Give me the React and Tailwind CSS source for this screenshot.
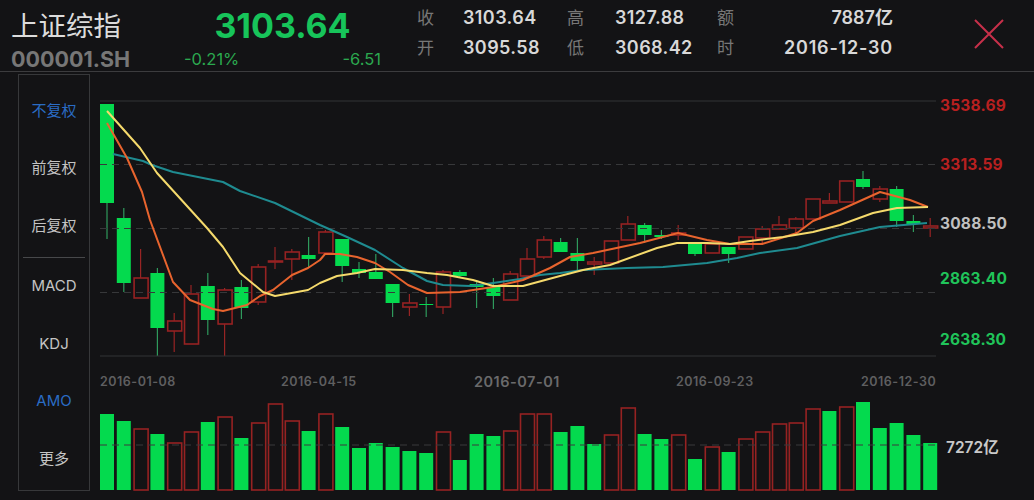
const GREEN = "#04da4e";
const RED = "#962222";

// type, body top, body bottom, wick high, wick low
const CANDLES = [
  ["g",104,203,104,239],["g",218,283,208,292],["r",278,298,249,298],["g",273,328,268,356],["r",321,331,313,352],
  ["r",294,344,285,344],["g",286,320,273,335],["r",290,324,288,356],["g",287,308,280,319],["r",267,302,264,305],
  ["r",261,262,247,269],["r",252,259,249,280],["g",255,259,237,267],["r",232,253,230,253],["g",239,266,239,282],
  ["g",269,273,262,278],["g",272,279,254,279],["g",284,303,284,317],["r",303,307,294,316],["g",304,305,297,317],
  ["r",272,307,270,314],["g",272,276,270,278],["g",284,287,280,308],["g",287,296,278,309],["r",274,300,271,300],
  ["r",259,276,248,278],["r",240,257,236,259],["g",242,252,238,252],["g",253,261,238,270],["r",262,264,257,275],
  ["r",241,263,241,263],["r",224,240,216,240],["g",225,235,223,243],["g",235,237,230,239],["r",233,235,225,240],
  ["g",244,254,244,256],["r",244,253,244,253],["g",247,254,247,263],["r",237,249,237,249],["r",229,238,226,245],
  ["r",225,229,216,229],["r",219,228,217,233],["r",199,219,199,219],["r",201,203,193,203],["r",181,202,181,202],
  ["g",179,187,171,189],["r",189,199,186,202],["g",189,221,186,227],["g",221,224,215,232],["r",226,228,218,237],
];

const VOLUMES = [
  ["g",414],["g",421],["r",429],["g",434],["r",443],["r",432],["g",422],["r",417],["g",438],["r",423],
  ["r",404],["r",421],["g",431],["r",414],["g",427],["g",448],["g",443],["g",447],["g",451],["g",453],
  ["r",432],["g",460],["g",434],["g",436],["r",431],["r",414],["r",414],["g",432],["g",426],["g",444],
  ["r",435],["r",408],["g",434],["g",439],["r",435],["g",459],["r",447],["g",452],["r",439],["r",432],
  ["r",424],["r",423],["r",409],["g",411],["r",407],["g",402],["g",428],["g",423],["g",435],["g",443],
];

const TEAL = "113,154 143,161 152,165 173,172 223,182 240,191 275,203 320,225 347,237 375,250 403,268 427,281 443,285 470,286 493,283 520,279 540,275 560,273 583,270 627,268 663,267 707,263 737,258 760,253 797,248 840,236 880,227 927,223";
const YELLOW = "107,111 140,148 157,173 207,228 223,247 240,273 263,292 275,296 308,290 320,283 337,276 357,273 375,269 403,270 427,273 447,275 473,280 493,286 523,286 560,276 583,270 610,265 657,248 677,243 707,243 730,244 750,241 783,237 813,232 840,225 873,213 897,208 928,207";
const ORANGE = "107,123 127,158 142,192 150,220 173,282 190,300 213,309 223,311 247,305 260,296 273,290 292,275 308,268 320,260 325,254 340,254 357,257 375,263 390,272 408,285 427,293 460,292 493,287 523,280 550,268 570,257 593,253 640,243 678,233 707,240 730,244 762,244 797,233 813,221 840,210 880,192 910,200 928,207";

function Candle({ c, i }) {
  const [type, top, bottom, high, low] = c;
  const x = 107 + 16.8 * i;
  const isGreen = type === "g";
  const wick = isGreen ? "#2f9a5c" : "#982424";
  return (
    <g>
      {high < top && <line x1={x} x2={x} y1={high} y2={top} stroke={wick} strokeWidth="1.2" />}
      {low > bottom && <line x1={x} x2={x} y1={bottom} y2={low} stroke={wick} strokeWidth="1.2" />}
      {isGreen ? (
        <rect x={x - 7} y={top} width="14" height={bottom - top} fill={GREEN} />
      ) : (
        <rect x={x - 6.5} y={top} width="14" height={bottom - top} fill="none" stroke={RED} strokeWidth="1.6" />
      )}
    </g>
  );
}

function PriceChart() {
  return (
    <svg width="846" height="267" viewBox="94 95 846 267" className="block shrink-0">
      {CANDLES.map((c, i) => <Candle key={i} c={c} i={i} />)}
      <line x1="100" x2="936" y1="101" y2="101" stroke="#333436" strokeWidth="1" />
      {[164.5, 228.5, 292.5].map((y) => (
        <line key={y} x1="100" x2="936" y1={y} y2={y} stroke="#37383a" strokeWidth="1" strokeDasharray="7 5" />
      ))}
      <line x1="100" x2="936" y1="356" y2="356" stroke="#333436" strokeWidth="1" />
      <polyline points={TEAL} fill="none" stroke="#1f8b90" strokeWidth="2" strokeLinejoin="round" />
      <polyline points={ORANGE} fill="none" stroke="#e8642e" strokeWidth="2" strokeLinejoin="round" />
      <polyline points={YELLOW} fill="none" stroke="#f5da6c" strokeWidth="2" strokeLinejoin="round" />
    </svg>
  );
}

function VolumeChart() {
  return (
    <svg width="846" height="100" viewBox="94 395 846 100" className="block shrink-0">
      {VOLUMES.map(([type, top], i) => {
        const x = 100 + 16.8 * i;
        return type === "g" ? (
          <rect key={i} x={x} y={top} width="14" height={490 - top} fill={GREEN} />
        ) : (
          <rect key={i} x={x + 0.5} y={top} width="14" height={490 - top} fill="none" stroke={RED} strokeWidth="1.6" />
        );
      })}
      <line x1="100" x2="936" y1="445" y2="445" stroke="#3a3b3c" strokeWidth="1" strokeDasharray="7 5" />
    </svg>
  );
}

const StatLabel = ({ children }) => <div className="text-[17px] leading-[30px] text-[#777777]">{children}</div>;
const StatValue = ({ children, className = "" }) => (
  <div className={`text-[18px] leading-[30px] font-semibold text-[#d8d8d8] ${className}`}>{children}</div>
);

export default function App() {
  return (
    <div className="w-[1034px] h-[500px] overflow-hidden flex flex-col bg-[#131315] font-[Inter,'Noto_Sans_CJK_SC',sans-serif]">
      <header className="h-[72px] shrink-0 border-b border-[#3c3c3e] flex">
        <div className="w-[184px] shrink-0 pl-[11px]">
          <div className="text-[27.5px] leading-[40px] mt-[6px] text-[#dcdcdc] whitespace-nowrap">上证综指</div>
          <div className="text-[21.5px] leading-[26px] font-bold text-[#777777]">000001.SH</div>
        </div>
        <div className="w-[197px] shrink-0">
          <div className="text-[34px] leading-[40px] mt-[6px] font-bold text-center text-[#17c45a]">3103.64</div>
          <div className="flex justify-between text-[16.5px] leading-[26px] text-[#2ba84f]">
            <span>-0.21%</span>
            <span>-6.51</span>
          </div>
        </div>
        <div className="ml-[36px] mt-[3px] w-[476px] shrink-0 grid grid-cols-[46px_104px_48px_102px_176px] content-start">
          <StatLabel>收</StatLabel>
          <StatValue className="tracking-[0.4px]">3103.64</StatValue>
          <StatLabel>高</StatLabel>
          <StatValue className="tracking-[0.4px]">3127.88</StatValue>
          <div className="flex justify-between">
            <StatLabel>额</StatLabel>
            <StatValue>7887亿</StatValue>
          </div>
          <StatLabel>开</StatLabel>
          <StatValue className="tracking-[0.4px]">3095.58</StatValue>
          <StatLabel>低</StatLabel>
          <StatValue className="tracking-[0.4px]">3068.42</StatValue>
          <div className="flex justify-between">
            <StatLabel>时</StatLabel>
            <StatValue className="tracking-[0.8px]">2016-12-30</StatValue>
          </div>
        </div>
        <div className="ml-[81px] mt-[19px] shrink-0">
          <svg width="30" height="30" viewBox="0 0 30 30" className="block">
            <path d="M1 1 L29 29 M29 1 L1 29" stroke="#c8304a" strokeWidth="2" fill="none" />
          </svg>
        </div>
      </header>

      <div className="flex flex-1 min-h-0 pl-[18px]">
        <nav className="mt-[2px] w-[72px] h-[417px] shrink-0 border border-[#37383a] flex flex-col items-center">
          <div className="mt-[26px] text-[15px] leading-[20px] text-[#2a6cc4]">不复权</div>
          <div className="mt-[37px] text-[15px] leading-[20px] text-[#c4c4c4]">前复权</div>
          <div className="mt-[38px] text-[15px] leading-[20px] text-[#c4c4c4]">后复权</div>
          <div className="mt-[21px] w-[62px] h-px shrink-0 bg-[#47484a]" />
          <div className="mt-[18px] text-[15px] leading-[20px] text-[#c4c4c4]">MACD</div>
          <div className="mt-[38px] text-[15px] leading-[20px] text-[#c4c4c4]">KDJ</div>
          <div className="mt-[37px] text-[15px] leading-[20px] text-[#2a6cc4]">AMO</div>
          <div className="mt-[38px] text-[15px] leading-[20px] text-[#c4c4c4]">更多</div>
        </nav>
        <main className="ml-[4px] flex-1 min-w-0 flex flex-col">
          <div className="h-[23px] shrink-0" />
          <div className="flex">
            <PriceChart />
            <div className="flex flex-col text-[15.5px] leading-[20px] font-bold tracking-[0.2px] whitespace-nowrap">
              <div className="mt-[1px] text-[#b82020]">3538.69</div>
              <div className="mt-[39px] text-[#b82020]">3313.59</div>
              <div className="mt-[39px] text-[#c0c0c0]">3088.50</div>
              <div className="mt-[35px] text-[#20c45a]">2863.40</div>
              <div className="mt-[41px] text-[#20c45a]">2638.30</div>
            </div>
          </div>
          <div className="mt-[11px] h-[18px] flex text-[12.5px] leading-[18px] font-semibold tracking-[0.5px] text-[#5f5f60] whitespace-nowrap">
            <span className="ml-[6px] w-[75px]">2016-01-08</span>
            <span className="ml-[106px] w-[75px]">2016-04-15</span>
            <span className="ml-[118px] w-[85px] text-[14.5px] text-[#6a6a6b]">2016-07-01</span>
            <span className="ml-[117px] w-[76px]">2016-09-23</span>
            <span className="ml-[109px] w-[75px]">2016-12-30</span>
          </div>
          <div className="mt-[4px] flex">
            <VolumeChart />
            <div className="mt-[44px] ml-[6px] text-[15.5px] leading-[18px] font-semibold text-[#c9c9c9] whitespace-nowrap">7272亿</div>
          </div>
        </main>
      </div>
    </div>
  );
}
